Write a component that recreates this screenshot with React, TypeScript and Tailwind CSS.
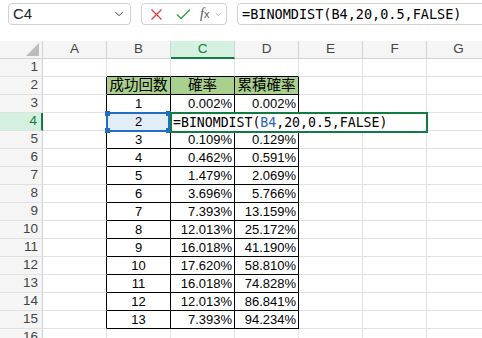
import { ChevronDown } from "lucide-react";

const cols = ["A", "B", "C", "D", "E", "F", "G"];

const data: [string, string, string][] = [
  ["1", "0.002%", "0.002%"],
  ["2", "", ""],
  ["3", "0.109%", "0.129%"],
  ["4", "0.462%", "0.591%"],
  ["5", "1.479%", "2.069%"],
  ["6", "3.696%", "5.766%"],
  ["7", "7.393%", "13.159%"],
  ["8", "12.013%", "25.172%"],
  ["9", "16.018%", "41.190%"],
  ["10", "17.620%", "58.810%"],
  ["11", "16.018%", "74.828%"],
  ["12", "12.013%", "86.841%"],
  ["13", "7.393%", "94.234%"],
];

const cellFont = { fontFamily: '"Liberation Sans", "Noto Sans CJK JP", sans-serif' };
const monoFont = { fontFamily: '"DejaVu Sans Mono", "Liberation Mono", monospace' };

// border colours per cell: right / bottom
const cellBorder = (row: number, col: number) => {
  const inTable = row >= 2 && row <= 15 && col >= 1 && col <= 3;
  const leftOfTable = row >= 2 && row <= 15 && col === 0;
  const aboveTable = row === 1 && col >= 1 && col <= 3;
  const right = inTable || leftOfTable ? "border-r-black" : "border-r-[#e1e1e1]";
  const bottom = inTable || aboveTable ? "border-b-black" : "border-b-[#e1e1e1]";
  return `${right} ${bottom}`;
};

const Cell = ({ row, col }: { row: number; col: number }) => {
  let content: string = "";
  let align = "justify-center";
  let extra = "bg-white";

  if (row === 2 && col >= 1 && col <= 3) {
    content = ["成功回数", "確率", "累積確率"][col - 1];
    extra = "bg-[#a9d08e] text-[14.5px]";
  } else if (row >= 3 && row <= 15 && col >= 1 && col <= 3) {
    const r = data[row - 3];
    content = r[col - 1];
    if (col > 1) align = "justify-end pr-[2px]";
    if (row === 4 && col === 1) extra = "bg-[#e3edf8]";
  }

  return (
    <div
      className={`flex h-[18px] w-[64px] shrink-0 items-center border-r border-b text-[13px] text-black ${align} ${extra} ${cellBorder(row, col)}`}
      style={cellFont}
    >
      {content}
    </div>
  );
};

const FormulaBar = () => (
  <div className="flex h-[41px] items-start gap-[10px] bg-white pt-[3px] pl-[8px]">
    <div className="flex h-[22px] w-[123px] shrink-0 items-center justify-between rounded-[4px] border border-[#d1d1d1] pr-[4px] pl-[4px]">
      <span className="text-[15px] text-[#222]" style={cellFont}>
        C4
      </span>
      <ChevronDown size={14} strokeWidth={1.6} className="text-[#444]" />
    </div>
    <div className="flex h-[22px] w-[86px] shrink-0 items-center rounded-[4px] border border-[#d1d1d1] pl-[8px]">
      <svg width="13" height="13" viewBox="0 0 13 13" className="mr-[13px]">
        <path d="M1.5 1.5 L11.5 11.5 M11.5 1.5 L1.5 11.5" stroke="#e23b3b" strokeWidth="1.3" fill="none" />
      </svg>
      <svg width="15" height="12" viewBox="0 0 15 12" className="mr-[9px]">
        <path d="M1 6.5 L5 10.5 L14 1.5" stroke="#2f9e44" strokeWidth="1.3" fill="none" />
      </svg>
      <span
        className="text-[14px] italic leading-none text-[#555]"
        style={{ fontFamily: '"Liberation Serif", serif' }}
      >
        f<span className="text-[11px] not-italic" style={{ fontFamily: '"Liberation Sans", sans-serif' }}>x</span>
      </span>
      <ChevronDown size={9} strokeWidth={1.6} className="ml-[5px] text-[#999]" />
    </div>
    <div className="flex h-[22px] w-[320px] shrink-0 items-center rounded-[4px] border border-[#d1d1d1] pl-[4px]">
      <span className="text-[13.5px] text-black" style={monoFont}>
        =BINOMDIST(B4,20,0.5,FALSE)
      </span>
    </div>
  </div>
);

const HeaderRow = () => (
  <div className="flex h-[18px]">
    <div className="relative h-[18px] w-[43px] shrink-0 border-r border-b border-[#d4d4d4] bg-[#f5f5f5]">
      <svg width="14" height="13" viewBox="0 0 14 13" className="absolute right-[2px] bottom-[2px]">
        <path d="M13 0 L13 13 L0 13 Z" fill="#bcbcbc" />
      </svg>
    </div>
    {cols.map((c) => (
      <div
        key={c}
        className={`flex h-[18px] w-[64px] shrink-0 items-center justify-center border-r text-[13.5px] ${
          c === "C"
            ? "border-b-2 border-r-[#d4d4d4] border-b-[#107c41] bg-[#d3f0e0] text-[#107c41]"
            : "border-b border-[#d4d4d4] bg-[#f5f5f5] text-[#444]"
        }`}
        style={cellFont}
      >
        {c}
      </div>
    ))}
  </div>
);

const Handle = ({ pos }: { pos: string }) => (
  <div className={`absolute h-[5px] w-[5px] bg-[#1f6fc5] ${pos}`} />
);

export default function App() {
  const rows = Array.from({ length: 16 }, (_, i) => i + 1);
  return (
    <div className="relative h-[338px] w-[482px] overflow-hidden bg-white">
      <FormulaBar />
      <HeaderRow />
      {rows.map((r) => (
        <div key={r} className="flex h-[18px]">
          <div
            className={`flex h-[18px] w-[43px] shrink-0 items-center justify-end border-b border-b-[#e1e1e1] pr-[4px] text-[13.5px] ${
              r === 4
                ? "border-r-2 border-r-[#107c41] bg-[#d3f0e0] text-[#107c41]"
                : "border-r border-r-[#d4d4d4] bg-[#f5f5f5] text-[#444]"
            }`}
            style={cellFont}
          >
            {r}
          </div>
          {cols.map((_, ci) => (
            <Cell key={ci} row={r} col={ci} />
          ))}
        </div>
      ))}

      {/* B4 range selection */}
      <div className="absolute top-[112px] left-[106px] h-[20px] w-[64px] border-2 border-[#1f6fc5]">
        <Handle pos="-top-[3px] -left-[3px]" />
        <Handle pos="-bottom-[3px] -left-[3px]" />
        <Handle pos="-top-[3px] -right-[3px]" />
        <Handle pos="-bottom-[3px] -right-[3px]" />
      </div>

      {/* C4 in-cell editor */}
      <div className="absolute top-[112px] left-[170px] flex h-[21px] w-[258px] items-center border-2 border-[#107c41] bg-white pl-[1px]">
        <span className="text-[13.2px] text-black" style={monoFont}>
          =BINOMDIST(<span className="text-[#2a63c4]">B4</span>,20,0.5,FALSE)
        </span>
      </div>
    </div>
  );
}
